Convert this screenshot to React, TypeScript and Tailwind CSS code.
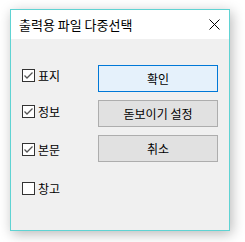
const font = { fontFamily: '"Noto Sans CJK KR", "Noto Sans", sans-serif' };

const CheckBox = ({ label, checked, className = '' }: { label: string; checked: boolean; className?: string }) => (
  <div className={`flex items-center h-[13px] ${className}`}>
    <div className="w-[13px] h-[13px] border border-[#333333] bg-white flex items-center justify-center">
      {checked && (
        <svg width="11" height="11" viewBox="0 0 11 11">
          <path d="M1.5 5.5 L4 8 L9.5 2.5" fill="none" stroke="#555555" strokeWidth="1.3" />
        </svg>
      )}
    </div>
    <span className="ml-[3px] text-[12px] leading-none text-black">{label}</span>
  </div>
);

const Button = ({ label, primary = false, className = '' }: { label: string; primary?: boolean; className?: string }) => (
  <button
    className={`w-[120px] h-[27px] text-[12px] leading-none text-black border ${
      primary ? 'bg-[#e5f1fb] border-[#0078d7]' : 'bg-[#e1e1e1] border-[#adadad]'
    } ${className}`}
  >
    {label}
  </button>
);

export default function App() {
  return (
    <div className="w-[245px] h-[242px] bg-white pt-[9px] pl-[10px]" style={font}>
      <div className="w-[220px] h-[222px] border border-[#5fd3d3] bg-[#f0f0f0] shadow-[2px_3px_12px_rgba(0,0,0,0.28)] flex flex-col">
        <div className="h-[29px] bg-white flex items-center justify-between pl-[8px] pr-[9px]">
          <span className="text-[13px] text-black leading-none">출력용 파일 다중선택</span>
          <svg width="11" height="11" viewBox="0 0 11 11">
            <path d="M0.5 0.5 L10.5 10.5 M10.5 0.5 L0.5 10.5" stroke="#000" strokeWidth="1" />
          </svg>
        </div>
        <div className="flex flex-1">
          <div className="flex flex-col pl-[11px] pt-[30px] w-[87px]">
            <CheckBox label="표지" checked />
            <CheckBox label="정보" checked className="mt-[23px]" />
            <CheckBox label="본문" checked className="mt-[25px]" />
            <CheckBox label="창고" checked={false} className="mt-[26px]" />
          </div>
          <div className="flex flex-col pt-[26px] gap-[8px]">
            <Button label="확인" primary />
            <Button label="돋보이기 설정" />
            <Button label="취소" />
          </div>
        </div>
      </div>
    </div>
  );
}
